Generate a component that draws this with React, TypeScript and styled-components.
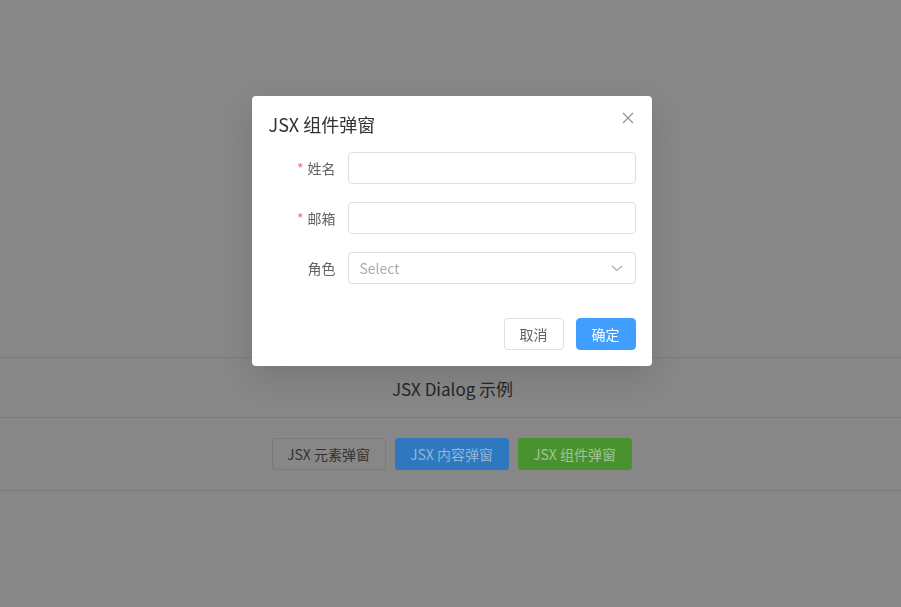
import styled, {createGlobalStyle} from 'styled-components'

const GlobalStyle = createGlobalStyle`
    html, body {
        margin: 0;
        padding: 0;
        background: #878787;
        font-family: 'Noto Sans CJK SC', 'Noto Sans', sans-serif;
    }
    * {
        box-sizing: border-box;
    }
`

type Tone = 'plain' | 'primary' | 'success'

const tones: Record<Tone, {bg: string; border: string; color: string}> = {
    plain: {bg: '#878787', border: '#7a7a7a', color: '#333'},
    primary: {bg: '#2e78c0', border: '#2e78c0', color: '#93b6d9'},
    success: {bg: '#4a922f', border: '#4a922f', color: '#a2c494'},
}

// field config for the dialog form
const fields = [
    {label: '姓名', required: true, select: false},
    {label: '邮箱', required: true, select: false},
    {label: '角色', required: false, select: true},
]

const App = () => {
    return (
        <>
            <GlobalStyle />
            <Page>
                <Spacer />
                <Header>JSX Dialog 示例</Header>
                <Actions>
                    <PageButton $tone="plain">JSX 元素弹窗</PageButton>
                    <PageButton $tone="primary">JSX 内容弹窗</PageButton>
                    <PageButton $tone="success">JSX 组件弹窗</PageButton>
                </Actions>
            </Page>

            <Overlay>
                <Dialog>
                    <DialogHeader>
                        <Title>JSX 组件弹窗</Title>
                        <CloseButton aria-label="close">
                            <svg width="12" height="12" viewBox="0 0 12 12">
                                <path
                                    d="M1 1L11 11M11 1L1 11"
                                    stroke="#909399"
                                    strokeWidth="1.1"
                                    fill="none"
                                />
                            </svg>
                        </CloseButton>
                    </DialogHeader>

                    <Form>
                        {fields.map((field, index) => (
                            <FormRow key={index}>
                                <Label>
                                    {field.required && <Asterisk>*</Asterisk>}
                                    {field.label}
                                </Label>
                                {field.select ? (
                                    <SelectBox>
                                        <Placeholder>Select</Placeholder>
                                        <svg width="14" height="14" viewBox="0 0 14 14">
                                            <path
                                                d="M2 5L7 9.5L12 5"
                                                stroke="#a8abb2"
                                                strokeWidth="1.1"
                                                fill="none"
                                            />
                                        </svg>
                                    </SelectBox>
                                ) : (
                                    <Input />
                                )}
                            </FormRow>
                        ))}
                    </Form>

                    <Footer>
                        <DialogButton>取消</DialogButton>
                        <DialogButton $primary>确定</DialogButton>
                    </Footer>
                </Dialog>
            </Overlay>
        </>
    )
}

export default App

const Page = styled.div`
    display: flex;
    flex-direction: column;
    min-height: 607px;
    background: #878787;
`

// empty area above the header
const Spacer = styled.div`
    height: 357px;
`

const Header = styled.div`
    height: 61px;
    display: flex;
    align-items: center;
    justify-content: center;
    border-top: 1px solid #7b7b7b;
    border-bottom: 1px solid #7b7b7b;
    font-size: 17px;
    color: #262626;
    padding: 2px 0 0 4px;
`

const Actions = styled.div`
    display: flex;
    justify-content: center;
    gap: 9px;
    padding: 20px 0 20px 2px;
    border-bottom: 1px solid #7b7b7b;
`

const PageButton = styled.button<{$tone: Tone}>`
    height: 32px;
    width: 114px;
    border-radius: 3px;
    font-family: inherit;
    font-size: 14px;
    line-height: 1;
    background: ${({$tone}) => tones[$tone].bg};
    border: 1px solid ${({$tone}) => tones[$tone].border};
    color: ${({$tone}) => tones[$tone].color};
`

const Overlay = styled.div`
    position: fixed;
    inset: 0;
    display: flex;
    justify-content: center;
    align-items: flex-start;
    padding: 96px 0 0 2px;
`

const Dialog = styled.div`
    width: 400px;
    background: #fff;
    border-radius: 4px;
    padding: 16px;
    box-shadow: 0 12px 32px rgba(0, 0, 0, 0.12);
`

const DialogHeader = styled.div`
    display: flex;
    align-items: center;
    justify-content: space-between;
    padding-bottom: 16px;
`

const Title = styled.span`
    font-size: 18px;
    line-height: 24px;
    color: #303133;
    padding-left: 1px;
`

const CloseButton = styled.button`
    border: none;
    background: transparent;
    padding: 0;
    display: flex;
    margin-top: -12px;
    margin-right: 2px;
`

const Form = styled.div`
    display: flex;
    flex-direction: column;
    gap: 18px;
`

const FormRow = styled.div`
    display: flex;
    align-items: center;
`

const Label = styled.label`
    width: 80px;
    padding-right: 12px;
    text-align: right;
    font-size: 14px;
    line-height: 32px;
    color: #606266;
`

const Asterisk = styled.span`
    color: #f56c6c;
    margin-right: 4px;
`

const Input = styled.div`
    flex: 1;
    height: 32px;
    border: 1px solid #dcdfe6;
    border-radius: 4px;
`

const SelectBox = styled.div`
    flex: 1;
    height: 32px;
    border: 1px solid #dcdfe6;
    border-radius: 4px;
    display: flex;
    align-items: center;
    justify-content: space-between;
    padding: 0 11px;
`

const Placeholder = styled.span`
    font-size: 14px;
    color: #a8abb2;
`

const Footer = styled.div`
    display: flex;
    justify-content: flex-end;
    gap: 12px;
    padding-top: 34px;
`

const DialogButton = styled.button<{$primary?: boolean}>`
    height: 32px;
    width: 60px;
    border-radius: 4px;
    font-family: inherit;
    font-size: 14px;
    line-height: 1;
    border: 1px solid ${({$primary}) => ($primary ? '#409eff' : '#dcdfe6')};
    background: ${({$primary}) => ($primary ? '#409eff' : '#fff')};
    color: ${({$primary}) => ($primary ? '#fff' : '#606266')};
`
